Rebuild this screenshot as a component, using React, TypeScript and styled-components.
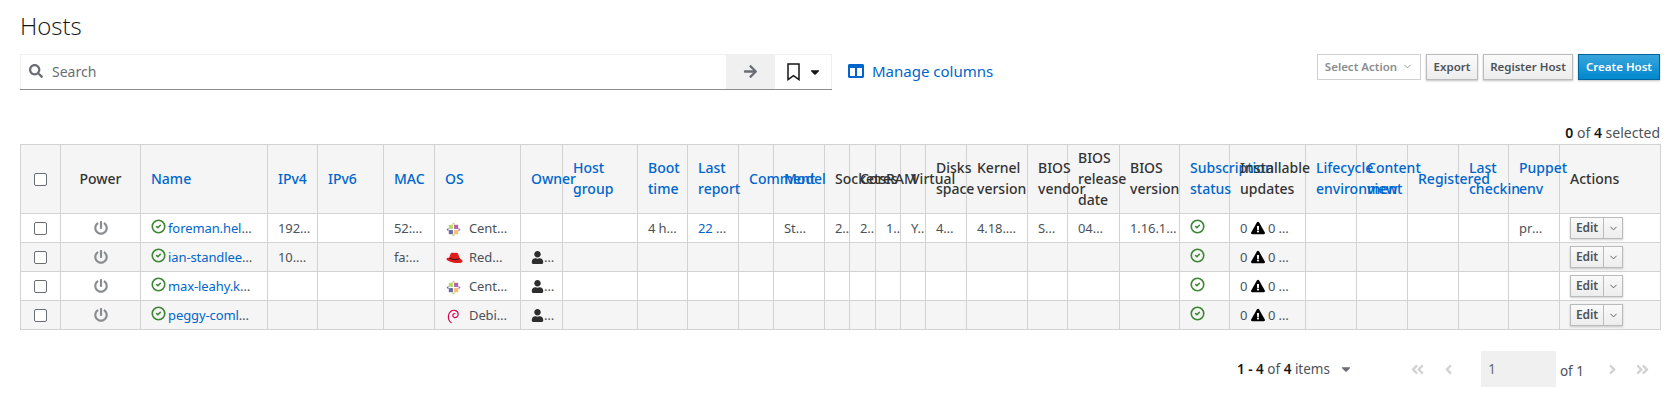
import React from "react";
import styled, { createGlobalStyle } from "styled-components";
import {
  FaSearch, FaArrowRight, FaCaretDown, FaColumns, FaPowerOff,
  FaAngleDoubleLeft, FaAngleDoubleRight, FaAngleLeft, FaAngleRight,
  FaExclamationTriangle, FaUser,
} from "react-icons/fa";
import { LuCircleCheck, LuChevronDown } from "react-icons/lu";

const Global = createGlobalStyle`
  html, body { margin: 0; padding: 0; background: #fff; }
  body { font-family: "Noto Sans", "Open Sans", sans-serif; font-size: 14px; color: #333; }
`;

const Page = styled.div`
  padding: 0 13px 0 20px;
  height: 400px;
  box-sizing: border-box;
  overflow: hidden;
`;
const Title = styled.h1`
  margin: 0;
  padding-top: 10px;
  height: 54px;
  box-sizing: border-box;
  font: 300 24px/32px "Open Sans", sans-serif;
  color: #151515;
`;
const Toolbar = styled.div`
  display: flex;
  align-items: flex-start;
  height: 36px;
`;
const SearchGroup = styled.div`
  display: flex;
  height: 36px;
  width: 812px;
  box-sizing: border-box;
  border-bottom: 1.5px solid #8a8d90;
`;
const SearchBox = styled.div`
  flex: 1;
  display: flex;
  align-items: center;
  gap: 9px;
  padding: 0 0 2px 8px;
  border: 1px solid #f0f0f0;
  border-bottom: 0;
  border-right: 0;
  color: #6a6e73;
  font-size: 14px;
`;
const GoButton = styled.div`
  width: 49px;
  background: #f0f0f0;
  display: flex;
  align-items: center;
  justify-content: center;
  color: #6a6e73;
`;
const BookmarkButton = styled.div`
  width: 57px;
  display: flex;
  align-items: center;
  justify-content: center;
  gap: 8px;
  padding-left: 3px;
  color: #151515;
  box-sizing: border-box;
  border: 1px solid #f0f0f0;
  border-bottom: 0;
  border-left: 0;
`;
const ManageColumns = styled.a`
  display: flex;
  align-items: center;
  gap: 8px;
  margin-left: 16px;
  height: 34px;
  color: #0066cc;
  font-size: 15px;
`;
const Actions = styled.div`
  margin-left: auto;
  display: flex;
  gap: 5px;
`;
const Btn = styled.button<{ $kind?: "default" | "primary" | "disabled"; $w: number }>`
  width: ${(p) => p.$w}px;
  height: 26px;
  box-sizing: border-box;
  padding: 0 0 1px;
  font: 600 11.5px "Noto Sans", sans-serif;
  display: flex;
  align-items: center;
  justify-content: center;
  gap: 5px;
  border: 1px solid
    ${(p) => (p.$kind === "primary" ? "#00659c" : p.$kind === "disabled" ? "#d1d1d1" : "#bbb")};
  color: ${(p) => (p.$kind === "primary" ? "#fff" : p.$kind === "disabled" ? "#8b8d8f" : "#4d5258")};
  background: ${(p) =>
    p.$kind === "primary"
      ? "linear-gradient(#39a5dc, #0088ce)"
      : p.$kind === "disabled"
      ? "#fff"
      : "linear-gradient(#fafafa, #ededed)"};
  box-shadow: ${(p) => (p.$kind === "disabled" ? "none" : "0 1px 2px rgba(0,0,0,.25)")};
`;
const SelectedCount = styled.div`
  height: 54px;
  box-sizing: border-box;
  padding-top: 33px;
  line-height: 19px;
  text-align: right;
  font-size: 14px;
  color: #4d5258;
  b { font-weight: 600; color: #151515; }
`;
const Table = styled.table`
  width: 1640px;
  table-layout: fixed;
  border-collapse: collapse;
`;
const Col = styled.col<{ $w: number }>`
  width: ${(p) => p.$w}px;
`;
const Th = styled.th<{ $center?: boolean }>`
  background: #f5f5f5;
  border: 1px solid #d2d2d2;
  padding: 1.5px 10px 3.5px;
  font-weight: 500;
  font-size: 14px;
  line-height: 21px;
  color: #333;
  text-align: ${(p) => (p.$center ? "center" : "left")};
  vertical-align: middle;
  overflow: visible;
`;
const SortLink = styled.a`
  color: #0066cc;
`;
const Row = styled.tr<{ $alt?: boolean }>`
  background: ${(p) => (p.$alt ? "#f5f5f5" : "#fff")};
`;
const Td = styled.td<{ $center?: boolean; $pr?: number }>`
  border: 1px solid #d2d2d2;
  height: 29px;
  box-sizing: border-box;
  padding: 0 ${(p) => p.$pr ?? (p.$center ? 10 : 6)}px 0 10px;
  font-size: 13px;
  letter-spacing: -0.1px;
  line-height: 20px;
  white-space: nowrap;
  overflow: hidden;
  text-overflow: ellipsis;
  color: #4d5258;
  text-align: ${(p) => (p.$center ? "center" : "left")};
  svg { vertical-align: -2px; }
`;
const CheckBox = styled.span`
  display: inline-block;
  width: 13px;
  height: 13px;
  box-sizing: border-box;
  border: 1px solid #6a6e73;
  border-radius: 2px;
  background: #fff;
  vertical-align: -2px;
`;
const HostLink = styled.a`
  color: #0066cc;
`;
const StatusIcon = styled(LuCircleCheck)`
  color: #3e8635;
  margin-right: 2px;
  vertical-align: -1px !important;
  stroke-width: 2.6;
`;
const PowerIcon = styled(FaPowerOff)`
  color: #8a8d90;
`;
const OsLogo = styled.svg<{ $mr: number; $ml: number }>`
  margin: 0 ${(p) => p.$mr}px 0 ${(p) => p.$ml}px;
  vertical-align: -4px !important;
`;
const OwnerIcon = styled(FaUser)`
  color: #2d2d2d;
`;
const EditGroup = styled.div`
  display: inline-flex;
  height: 22px;
  vertical-align: middle;
  box-shadow: 0 1px 2px rgba(0,0,0,.2);
`;
const EditBtn = styled.span`
  width: 34px;
  box-sizing: border-box;
  border: 1px solid #bbb;
  background: linear-gradient(#fafafa, #ededed);
  color: #4d5258;
  font-size: 12px;
  font-weight: 600;
  line-height: 20px;
  text-align: center;
`;
const CaretBtn = styled.span`
  width: 19px;
  box-sizing: border-box;
  border: 1px solid #bbb;
  border-left: 0;
  background: linear-gradient(#fafafa, #ededed);
  color: #4d5258;
  display: flex;
  align-items: center;
  justify-content: center;
`;
const Pagination = styled.div`
  display: flex;
  align-items: center;
  justify-content: flex-end;
  height: 36px;
  margin-top: 21px;
  padding-right: 10px;
  color: #4d5258;
  font-size: 13.5px;
  b { font-weight: 600; color: #151515; }
`;
const Caret = styled(FaCaretDown)`
  margin: 0 57px 0 9px;
  color: #6a6e73;
`;
const PageNav = styled.span<{ $gap?: number }>`
  display: inline-flex;
  color: #d2d2d2;
  margin-right: ${(p) => p.$gap ?? 0}px;
`;
const PageInput = styled.div`
  width: 75px;
  height: 36px;
  box-sizing: border-box;
  background: #f0f0f0;
  color: #6a6e73;
  padding-left: 7px;
  line-height: 36px;
  font-size: 14px;
`;
const PageOf = styled.span`
  margin: 4px 21px 0 4px;
  font-size: 13.5px;
`;

const CentOS = () => (
  <OsLogo width="15" height="15" viewBox="0 0 16 16" $mr={8} $ml={1}>
    <rect x="3" y="3" width="4.4" height="4.4" fill="#b6d86a" />
    <rect x="8.6" y="3" width="4.4" height="4.4" fill="#b264ab" />
    <rect x="3" y="8.6" width="4.4" height="4.4" fill="#6a6aa8" />
    <rect x="8.6" y="8.6" width="4.4" height="4.4" fill="#f3c070" />
    <path d="M8 0.6 L10 2.6 H6Z" fill="#f3c070" />
    <path d="M15.4 8 L13.4 10 V6Z" fill="#b264ab" />
    <path d="M8 15.4 L6 13.4 H10Z" fill="#b6d86a" />
    <path d="M0.6 8 L2.6 6 V10Z" fill="#6a6aa8" />
  </OsLogo>
);
const RedHat = () => (
  <OsLogo width="17" height="16" viewBox="0 0 17 16" $mr={6} $ml={1}>
    <path d="M5 3.2C6.2 2.4 7.4 3 8.6 3c1.5 0 2.6-.6 3.4.6.5.8 1.1 3.2 1.5 4.6 1.4.6 3 1.7 3 3 0 1.6-2.6 1.9-5 1.9C7 13.1 0.5 10.8.5 9c0-1 1.5-1.6 2.9-1.2.3-1.7.8-3.8 1.6-4.6Z" fill="#e01b1b" />
    <path d="M3.2 7.9c2.6 1.6 7 2.6 10.4.4" stroke="#1a1a1a" strokeWidth="1" fill="none" />
  </OsLogo>
);
const Debian = () => (
  <OsLogo width="16" height="16" viewBox="0 0 16 16" $mr={8} $ml={0}>
    <path d="M6.5 15C4.2 13.2 3 10.6 3.5 7.6 4 4.2 6.8 2 9.6 2.3c2.6.3 3.9 2.4 3.5 4.5-.3 1.9-2 3.2-3.6 2.8-1.4-.4-2-1.6-1.6-2.8.3-1 1.4-1.6 2.4-1.1" stroke="#d70751" strokeWidth="1.2" fill="none" />
  </OsLogo>
);
const BookmarkIcon = () => (
  <svg width="13" height="18" viewBox="0 0 13 18">
    <path d="M1 1h11v15.6L6.5 12.6 1 16.6z" fill="none" stroke="#151515" strokeWidth="1.5" />
  </svg>
);

const widths = [40,80,127,50,66,51,86,42,75,50,51,35,51,25,26,25,25,41,61,40,52,60,50,76,51,51,51,50,51,101];
const heads: [string, boolean][] = [
  ["Name", true], ["IPv4", true], ["IPv6", true], ["MAC", true], ["OS", true], ["Owner", true],
  ["Host group", true], ["Boot time", true], ["Last report", true], ["Comment", true], ["Model", true],
  ["Sockets", false], ["Cores", false], ["RAM", false], ["Virtual", false], ["Disks space", false],
  ["Kernel version", false], ["BIOS vendor", false], ["BIOS release date", false], ["BIOS version", false],
  ["Subscription status", true], ["Installable updates", false], ["Lifecycle environment", true],
  ["Content view", true], ["Registered", true], ["Last checkin", true], ["Puppet env", true],
];

type Host = { name: string; ip?: string; mac?: string; os: "c" | "r" | "d"; osName: string; owner: boolean; full?: boolean };
const hosts: Host[] = [
  { name: "foreman.helmsman.example.com", ip: "192.168.122.10", mac: "52:54:00:aa:bb:cc", os: "c", osName: "CentOS Stream 8", owner: false, full: true },
  { name: "ian-standleeman.example.com", ip: "10.8.0.12", mac: "fa:16:3e:11:22:33", os: "r", osName: "RedHat 8.6", owner: true },
  { name: "max-leahy.kwality.example.com", os: "c", osName: "CentOS Stream 8", owner: true },
  { name: "peggy-comlmnt.example.com", os: "d", osName: "Debian 11", owner: true },
];

const Logo = ({ os }: { os: Host["os"] }) => (os === "c" ? <CentOS /> : os === "r" ? <RedHat /> : <Debian />);

export default function App() {
  return (
    <Page>
      <Global />
      <Title>Hosts</Title>
      <Toolbar>
        <SearchGroup>
          <SearchBox><FaSearch size={14} />Search</SearchBox>
          <GoButton><FaArrowRight size={15} /></GoButton>
          <BookmarkButton><BookmarkIcon /><FaCaretDown size={14} /></BookmarkButton>
        </SearchGroup>
        <ManageColumns><FaColumns size={16} />Manage columns</ManageColumns>
        <Actions>
          <Btn $kind="disabled" $w={104}>Select Action <LuChevronDown size={11} /></Btn>
          <Btn $w={52}>Export</Btn>
          <Btn $w={90}>Register Host</Btn>
          <Btn $kind="primary" $w={82}>Create Host</Btn>
        </Actions>
      </Toolbar>
      <SelectedCount><b>0</b> of <b>4</b> selected</SelectedCount>
      <Table>
        <colgroup>{widths.map((w, i) => <Col key={i} $w={w} />)}</colgroup>
        <thead>
          <tr>
            <Th $center><CheckBox /></Th>
            <Th $center>Power</Th>
            {heads.map(([h, s]) => <Th key={h}>{s ? <SortLink>{h}</SortLink> : h}</Th>)}
            <Th>Actions</Th>
          </tr>
        </thead>
        <tbody>
          {hosts.map((h, i) => (
            <Row key={h.name} $alt={i % 2 === 1}>
              <Td $center><CheckBox /></Td>
              <Td $center><PowerIcon size={14} /></Td>
              <Td $pr={10}><StatusIcon size={15} /><HostLink>{h.name}</HostLink></Td>
              <Td>{h.ip}</Td>
              <Td />
              <Td $pr={8}>{h.mac}</Td>
              <Td $pr={12}><Logo os={h.os} />{h.osName}</Td>
              <Td>{h.owner && <><OwnerIcon size={13} />Admin User</>}</Td>
              <Td />
              <Td>{h.full && "4 hours ago"}</Td>
              <Td>{h.full && <HostLink>22 minutes ago</HostLink>}</Td>
              <Td />
              <Td $pr={14}>{h.full && "Standard PC"}</Td>
              <Td>{h.full && "24"}</Td>
              <Td>{h.full && "24"}</Td>
              <Td>{h.full && "15.4 GB"}</Td>
              <Td>{h.full && "Yes"}</Td>
              <Td>{h.full && "40 GB"}</Td>
              <Td>{h.full && "4.18.0-372"}</Td>
              <Td>{h.full && "SeaBIOS"}</Td>
              <Td $pr={14}>{h.full && "04/01/2014"}</Td>
              <Td $pr={2}>{h.full && "1.16.1-1.el9"}</Td>
              <Td><StatusIcon size={15} /></Td>
              <Td $pr={14}>0 <FaExclamationTriangle size={14} color="#000" /> 0 updates</Td>
              <Td />
              <Td />
              <Td />
              <Td />
              <Td $pr={14}>{h.full && "production"}</Td>
              <Td><EditGroup><EditBtn>Edit</EditBtn><CaretBtn><LuChevronDown size={11} /></CaretBtn></EditGroup></Td>
            </Row>
          ))}
        </tbody>
      </Table>
      <Pagination>
        <span><b>1 - 4</b> of <b>4</b> items</span>
        <Caret size={14} />
        <PageNav $gap={16}><FaAngleDoubleLeft size={15} /></PageNav>
        <PageNav $gap={25}><FaAngleLeft size={15} /></PageNav>
        <PageInput>1</PageInput>
        <PageOf>of 1</PageOf>
        <PageNav $gap={15}><FaAngleRight size={15} /></PageNav>
        <PageNav><FaAngleDoubleRight size={15} /></PageNav>
      </Pagination>
    </Page>
  );
}
